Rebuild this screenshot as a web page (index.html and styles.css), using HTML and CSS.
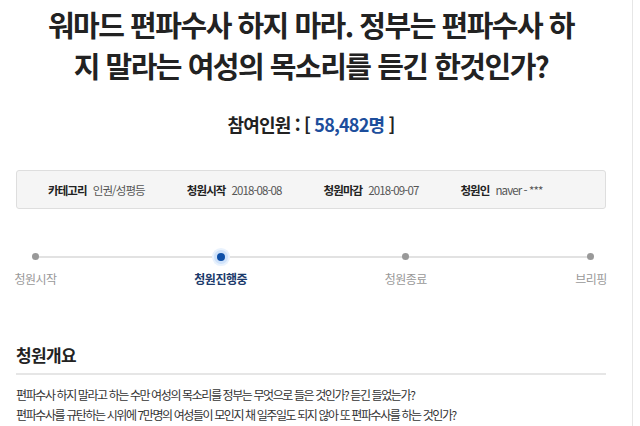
FILE: index.html
```html
<!DOCTYPE html>
<html lang="ko">
<head>
<meta charset="utf-8">
<link rel="stylesheet" href="styles.css">
</head>
<body>
<div class="page">
  <div class="content">
    <h1 class="title">워마드 편파수사 하지 마라. 정부는 편파수사 하<br>지 말라는 여성의 목소리를 듣긴 한것인가?</h1>
    <h2 class="count">참여인원 : [ <span class="num">58,482명</span> ]</h2>
    <ul class="info">
      <li><strong>카테고리</strong><span>인권/성평등</span></li>
      <li><strong>청원시작</strong><span>2018-08-08</span></li>
      <li><strong>청원마감</strong><span>2018-09-07</span></li>
      <li><strong>청원인</strong><span>naver - ***</span></li>
    </ul>
    <ol class="steps">
      <li class="step"><i class="dot"></i><span class="label">청원시작</span></li>
      <li class="step active"><i class="dot"></i><span class="label">청원진행중</span></li>
      <li class="step"><i class="dot"></i><span class="label">청원종료</span></li>
      <li class="step"><i class="dot"></i><span class="label">브리핑</span></li>
    </ol>
    <h3 class="section">청원개요</h3>
    <div class="body">
      <p>편파수사 하지 말라고 하는 수만 여성의 목소리를 정부는 무엇으로 들은 것인가? 듣긴 들었는가?</p>
      <p>편파수사를 규탄하는 시위에 7만명의 여성들이 모인지 채 일주일도 되지 않아 또 편파수사를 하는 것인가?</p>
    </div>
  </div>
</div>
</body>
</html>
```

FILE: styles.css
```css
* { box-sizing: border-box; }
html, body { margin: 0; padding: 0; background: #fff; }
body {
  font-family: "Noto Sans CJK KR", "Noto Sans", sans-serif;
  color: #222;
  overflow: hidden;
}
.page {
  width: 633px;
  height: 426px;
  border-right: 1px solid #e6e6e6;
}
.content {
  width: 590px;
  margin-left: 16px;
}
.title {
  margin: 0;
  padding-top: 4px;
  font-size: 29px;
  line-height: 41px;
  font-weight: 700;
  letter-spacing: -1.5px;
  text-align: center;
  color: #222;
}
.count {
  margin: 25px 0 0;
  font-size: 18px;
  line-height: 26px;
  font-weight: 700;
  letter-spacing: -0.8px;
  text-align: center;
  color: #222;
}
.count .num { color: #1d4e9c; }
.info {
  list-style: none;
  margin: 33px 0 0;
  padding: 0 0 0 31px;
  height: 39px;
  display: flex;
  align-items: center;
  gap: 42px;
  background: #f5f5f5;
  border: 1px solid #dedede;
  border-radius: 3px;
  font-size: 11.5px;
  letter-spacing: -0.9px;
}
.info li { display: flex; gap: 6px; }
.info strong { font-weight: 700; color: #222; }
.info span { color: #555; }
.steps {
  list-style: none;
  position: relative;
  display: flex;
  justify-content: space-between;
  margin: 44px 15px 0 19.5px;
  padding: 0;
}
.steps::before {
  content: "";
  position: absolute;
  left: 0;
  right: 0;
  top: 2.5px;
  height: 2px;
  background: #e2e2e2;
}
.step {
  width: 0;
  display: flex;
  flex-direction: column;
  align-items: center;
  position: relative;
}
.dot {
  display: block;
  width: 7px;
  height: 7px;
  border-radius: 50%;
  background: #999;
}
.label {
  margin-top: 11px;
  font-size: 12px;
  line-height: 16px;
  white-space: nowrap;
  color: #999;
  letter-spacing: -0.5px;
}
.step.active .dot {
  width: 8px;
  height: 8px;
  margin-top: -0.5px;
  background: #0d4fa8;
  box-shadow: 0 0 0 3px #cfe2fa, 0 0 0 5px #e9f2fd;
}
.step.active .label {
  margin-top: 10.5px;
  font-weight: 700;
  color: #1b3a6b;
}
.section {
  margin: 56px 0 0;
  padding-bottom: 6px;
  font-size: 17px;
  line-height: 24px;
  font-weight: 700;
  letter-spacing: -0.6px;
  color: #222;
  border-bottom: 2px solid #e6e6e6;
}
.body { padding-top: 10px; }
.body p {
  margin: 0;
  font-size: 12px;
  line-height: 20px;
  letter-spacing: -1.4px;
  color: #333;
}
```
